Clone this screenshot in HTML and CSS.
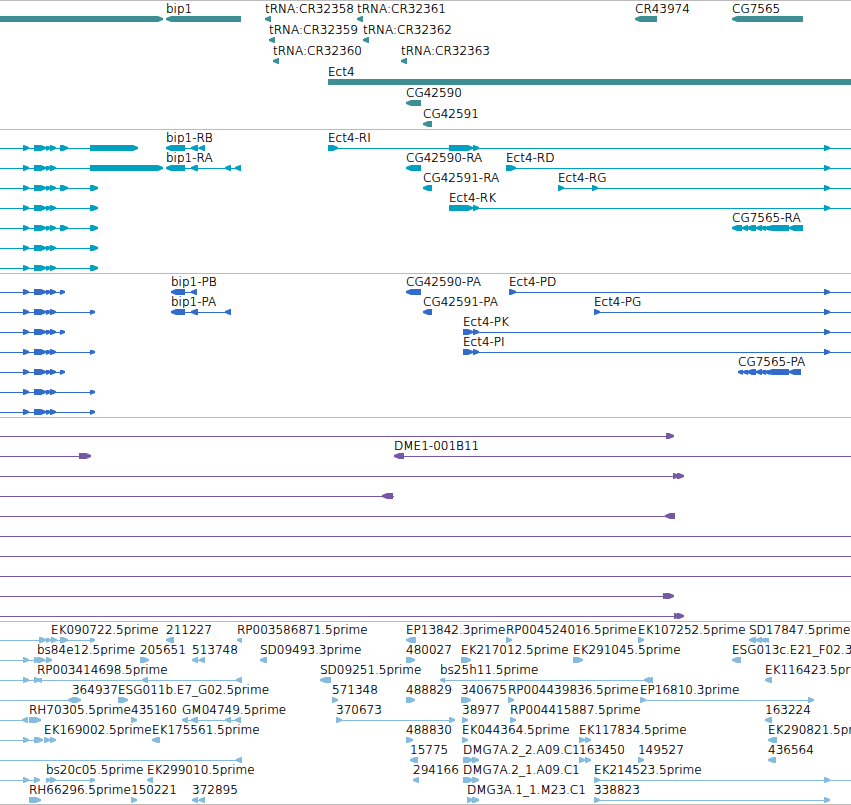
FILE: index.html
```html
<!DOCTYPE html>
<html lang="en">

<head>
    <meta charset="UTF-8">
    <meta name="viewport" content="width=device-width, initial-scale=1.0">
    <title>Genome browser</title>
    <link rel="stylesheet" href="styles.css">
</head>

<body>
    <main class="browser">
        <section class="track gene" aria-label="Gene"></section>
        <section class="track mrna" aria-label="mRNA"></section>
        <section class="track protein" aria-label="Protein"></section>
        <section class="track bac" aria-label="BAC"></section>
        <section class="track est" aria-label="EST"></section>
    </main>
    <script src="script.js"></script>
</body>

</html>
```

FILE: styles.css
```css
* {
    margin: 0;
    padding: 0;
    box-sizing: border-box;
}

body {
    background-color: #fff;
    color: #000;
    font-family: "DejaVu Sans", sans-serif;
    font-size: 12px;
    line-height: 14px;
}

.browser {
    border-top: 1px solid #bbb;
}

.track {
    padding: 1px 0 2px;
    border-bottom: 1px solid #bbb;
    overflow: hidden;
}

.track:last-child {
    padding-bottom: 1px;
}

.row {
    position: relative;
    height: 20px;
}

.gene {
    padding-top: 0;
    color: #3e8f94;
}

.gene .row {
    height: 21px;
}

.mrna {
    color: #00a0c1;
}

.protein {
    color: #316ccc;
}

.bac {
    color: #7558a6;
}

.est {
    color: #87bbdd;
}

/* features sit at their place on the sequence */
.label {
    position: absolute;
    bottom: 6px;
    color: #000;
    font-weight: 200;
    text-shadow: 0 0 0 #000;
    white-space: nowrap;
}

.intron {
    position: absolute;
    bottom: 2px;
    height: 1px;
    background-color: currentColor;
}

.exon {
    position: absolute;
    bottom: 0;
    height: 6px;
    background-color: currentColor;
}

.forward {
    clip-path: polygon(0 0, calc(100% - 5px) 0, 100% 33%, 100% 67%, calc(100% - 5px) 100%, 0 100%);
}

.reverse {
    clip-path: polygon(100% 0, 5px 0, 0 33%, 0 67%, 5px 100%, 100% 100%);
}
```

FILE: script.js
```js
// length of the visible region
const SPAN = 851;

// [name, strand, exons, line start, line end]
const tracks = {
    gene: [
        [
            ['', '+', [[-9, 163]]],
            ['bip1', '-', [[166, 241]]],
            ['tRNA:CR32358', '-', [[265, 271]]],
            ['tRNA:CR32361', '-', [[357, 363]]],
            ['CR43974', '-', [[635, 657]]],
            ['CG7565', '-', [[732, 803]]]
        ],
        [
            ['tRNA:CR32359', '-', [[269, 275]]],
            ['tRNA:CR32362', '-', [[363, 369]]]
        ],
        [
            ['tRNA:CR32360', '-', [[273, 279]]],
            ['tRNA:CR32363', '-', [[401, 407]]]
        ],
        [
            ['Ect4', '+', [[328, 870]]]
        ],
        [
            ['CG42590', '-', [[406, 421]]]
        ],
        [
            ['CG42591', '-', [[423, 432]]]
        ]
    ],
    mrna: [
        [
            ['', '+', [[23, 29], [34, 46], [46, 51], [50, 56], [60, 68], [90, 138]], 0],
            ['bip1-RB', '-', [[166, 185], [191, 198], [199, 205]]],
            ['Ect4-RI', '+', [[328, 338], [449, 473], [473, 479], [824, 830]], 328, 851]
        ],
        [
            ['', '+', [[23, 29], [34, 46], [46, 51], [50, 56], [90, 163]], 0],
            ['bip1-RA', '-', [[166, 185], [191, 198], [225, 231], [235, 241]]],
            ['CG42590-RA', '-', [[406, 421]]],
            ['Ect4-RD', '+', [[506, 516], [824, 830]], 506, 851]
        ],
        [
            ['', '+', [[23, 29], [34, 46], [46, 51], [50, 56], [60, 68], [90, 98]], 0],
            ['CG42591-RA', '-', [[423, 432]]],
            ['Ect4-RG', '+', [[558, 564], [592, 598], [824, 830]], 558, 851]
        ],
        [
            ['', '+', [[23, 29], [34, 46], [46, 51], [50, 56], [90, 98]], 0],
            ['Ect4-RK', '+', [[449, 473], [473, 479], [824, 830]], 449, 851]
        ],
        [
            ['', '+', [[23, 29], [34, 46], [46, 51], [50, 56], [60, 68], [90, 98]], 0],
            ['CG7565-RA', '-', [[732, 742], [742, 748], [747, 756], [756, 762], [761, 766], [765, 770], [767, 789], [789, 803]]]
        ],
        [
            ['', '+', [[23, 29], [34, 46], [46, 51], [50, 56], [90, 98]], 0]
        ],
        [
            ['', '+', [[23, 29], [34, 46], [46, 51], [50, 56], [90, 98]], 0]
        ]
    ],
    protein: [
        [
            ['', '+', [[23, 29], [34, 46], [46, 51], [50, 56], [60, 65]], 0],
            ['bip1-PB', '-', [[171, 185], [191, 197]]],
            ['CG42590-PA', '-', [[406, 421]]],
            ['Ect4-PD', '+', [[509, 516], [824, 830]], 509, 851]
        ],
        [
            ['', '+', [[23, 29], [34, 46], [46, 51], [50, 56], [90, 95]], 0],
            ['bip1-PA', '-', [[171, 185], [191, 198], [225, 231]]],
            ['CG42591-PA', '-', [[423, 432]]],
            ['Ect4-PG', '+', [[594, 600], [824, 830]], 594, 851]
        ],
        [
            ['', '+', [[23, 29], [34, 46], [46, 51], [50, 56], [60, 65]], 0],
            ['Ect4-PK', '+', [[463, 473], [473, 479], [824, 830]], 463, 851]
        ],
        [
            ['', '+', [[23, 29], [34, 46], [46, 51], [50, 56], [90, 95]], 0],
            ['Ect4-PI', '+', [[463, 473], [473, 479], [824, 830]], 463, 851]
        ],
        [
            ['', '+', [[23, 29], [34, 46], [46, 51], [50, 56], [60, 65]], 0],
            ['CG7565-PA', '-', [[738, 743], [743, 748], [747, 756], [756, 762], [761, 766], [765, 770], [767, 789], [789, 801]]]
        ],
        [
            ['', '+', [[23, 29], [34, 46], [46, 51], [50, 56], [90, 95]], 0]
        ],
        [
            ['', '+', [[23, 29], [34, 46], [46, 51], [50, 56], [90, 95]], 0]
        ]
    ],
    bac: [
        [
            ['', '+', [[666, 674]], 0]
        ],
        [
            ['', '+', [[79, 91]], 0],
            ['DME1-001B11', '-', [[394, 404]], 394, 851]
        ],
        [
            ['', '+', [[673, 679], [677, 684]], 0]
        ],
        [
            ['', '-', [[382, 393]], 0, 394]
        ],
        [
            ['', '-', [[665, 675]], 0]
        ],
        [
            ['', '+', [], 0, 851]
        ],
        [
            ['', '+', [], 0, 851]
        ],
        [
            ['', '+', [], 0, 851]
        ],
        [
            ['', '+', [[663, 669], [665, 674]], 0]
        ],
        [
            ['', '+', [[674, 680], [677, 684]], 0]
        ]
    ],
    est: [
        [
            ['', '+', [[39, 46], [46, 51]], 0],
            ['EK090722.5prime', '+', [[51, 57], [60, 68], [90, 95]]],
            ['211227', '-', [[166, 174]]],
            ['RP003586871.5prime', '-', [[237, 242]]],
            ['EP13842.3prime', '-', [[406, 416]]],
            ['RP004524016.5prime', '+', [[506, 512]]],
            ['EK107252.5prime', '+', [[638, 644]]],
            ['SD17847.5prime', '-', [[749, 756], [756, 762], [761, 766], [764, 769]]]
        ],
        [
            ['', '+', [[23, 29], [34, 40]], 0],
            ['bs84e12.5prime', '+', [[37, 45], [46, 52]]],
            ['205651', '+', [[140, 149]]],
            ['513748', '-', [[192, 198], [199, 205]]],
            ['SD09493.3prime', '-', [[260, 267]]],
            ['480027', '+', [[406, 415]]],
            ['EK217012.5prime', '+', [[461, 471]]],
            ['EK291045.5prime', '+', [[573, 583]]],
            ['ESG013c.E21_F02.3prime', '-', [[732, 741]]]
        ],
        [
            ['', '+', [[23, 29], [34, 40]], 0],
            ['RP003414698.5prime', '-', [[37, 42], [142, 148], [236, 242]]],
            ['SD09251.5prime', '-', [[320, 331]]],
            ['bs25h11.5prime', '-', [[440, 445], [644, 650], [647, 653]]],
            ['EK116423.5prime', '-', [[765, 772]]]
        ],
        [
            ['', '-', [[68, 77]], 0],
            ['364937', '+', [[72, 81]]],
            ['ESG011b.E7_G02.5prime', '+', [[118, 128]]],
            ['571348', '+', [[332, 338]]],
            ['488829', '+', [[406, 415]]],
            ['340675', '+', [[461, 471]]],
            ['RP004439836.5prime', '+', [[508, 514]]],
            ['EP16810.3prime', '+', [[640, 646], [808, 814]]]
        ],
        [
            ['', '-', [[22, 28]], 0],
            ['RH70305.5prime', '+', [[29, 41]]],
            ['435160', '+', [[131, 137]]],
            ['GM04749.5prime', '-', [[182, 188], [191, 198], [225, 231], [235, 241]]],
            ['370673', '+', [[336, 342], [449, 455]]],
            ['38977', '+', [[462, 468]]],
            ['RP004415887.5prime', '+', [[510, 516]]],
            ['163224', '-', [[765, 772]]]
        ],
        [
            ['', '+', [[23, 29], [34, 43]], 0],
            ['EK169002.5prime', '+', [[44, 50], [50, 56]]],
            ['EK175561.5prime', '-', [[152, 160]]],
            ['488830', '+', [[406, 413]]],
            ['EK044364.5prime', '+', [[462, 468]]],
            ['EK117834.5prime', '+', [[579, 585], [585, 591]]],
            ['EK290821.5prime', '-', [[768, 777]]]
        ],
        [
            ['', '-', [[236, 242]], 0],
            ['15775', '-', [[410, 418]]],
            ['DMG7A.2_2.A09.C1', '+', [[463, 473], [472, 479]]],
            ['163450', '+', [[579, 585], [585, 591]]],
            ['149527', '+', [[638, 644]]],
            ['436564', '-', [[768, 776]]]
        ],
        [
            ['', '+', [[23, 29], [34, 40]], 0],
            ['bs20c05.5prime', '+', [[46, 51], [50, 56], [90, 95]]],
            ['EK299010.5prime', '-', [[147, 153]]],
            ['294166', '-', [[413, 419]]],
            ['DMG7A.2_1.A09.C1', '+', [[463, 473], [472, 479]]],
            ['EK214523.5prime', '+', [[594, 600], [824, 830]], 594, 851]
        ],
        [
            ['RH66296.5prime', '+', [[29, 41]]],
            ['150221', '+', [[131, 137]]],
            ['372895', '-', [[192, 198], [199, 205]]],
            ['DMG3A.1_1.M23.C1', '+', [[467, 473], [472, 479]]],
            ['338823', '+', [[594, 600], [824, 830]]]
        ]
    ]
};

function percent(value) {
    return `${value / SPAN * 100}%`;
}

function addPart(row, className, start, end) {
    const part = document.createElement('span');
    part.className = className;
    part.style.left = percent(start);
    if (end !== undefined) {
        part.style.width = percent(end - start);
    }
    row.appendChild(part);
    return part;
}

function drawFeature(row, [name, strand, exons, from, to]) {
    const first = exons.length ? exons[0][0] : from;
    const last = exons.length ? exons[exons.length - 1][1] : to;
    const start = from === undefined ? first : from;
    // stop short of the last arrow tip
    const end = to === undefined ? last - 1 : to;
    // a single exon has no line of its own
    if (exons.length !== 1 || from !== undefined) {
        addPart(row, 'intron', start, end);
    }
    exons.forEach(([a, b]) => {
        addPart(row, strand === '+' ? 'exon forward' : 'exon reverse', a, b);
    });
    if (name) {
        addPart(row, 'label', first).textContent = name;
    }
}

Object.keys(tracks).forEach((key) => {
    const track = document.querySelector(`.${key}`);
    tracks[key].forEach((features) => {
        const row = document.createElement('div');
        row.className = 'row';
        features.forEach((feature) => drawFeature(row, feature));
        track.appendChild(row);
    });
});
```
